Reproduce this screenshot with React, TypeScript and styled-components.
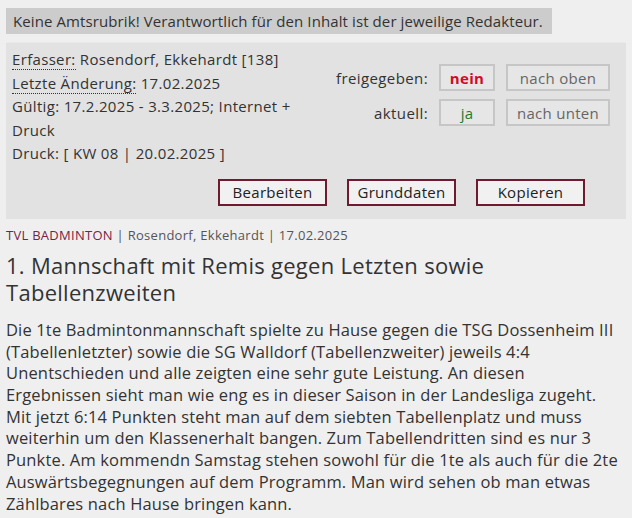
import React from "react";
import styled, { createGlobalStyle } from "styled-components";

const Global = createGlobalStyle`
  html, body { margin: 0; padding: 0; background: #efefef; }
  body { font-family: "Open Sans", "Liberation Sans", sans-serif; color: #333; }
`;

const Page = styled.div`
  padding: 8px 6px 0 6px;
  display: flex;
  flex-direction: column;
  align-items: flex-start;
`;

const Notice = styled.div`
  background: #cccccc;
  font-size: 15px;
  letter-spacing: 0.1px;
  line-height: 26px;
  height: 26px;
  padding: 0 6px 0 7px;
  width: 546px;
  box-sizing: border-box;
  color: #333;
  white-space: nowrap;
`;

const Panel = styled.div`
  margin-top: 8px;
  width: 620px;
  box-sizing: border-box;
  background: #e2e2e2;
  border-top: 1px solid #e9e9e9;
  padding: 5px 0 13px 6px;
  display: flex;
  flex-direction: column;
`;

const PanelTop = styled.div`
  display: flex;
  justify-content: space-between;
`;

const Info = styled.div`
  width: 292px;
  font-size: 15px;
  letter-spacing: 0.33px;
  line-height: 23.6px;
  color: #333;
`;

const Abbr = styled.span`
  border-bottom: 1px dotted #333;
`;

const Status = styled.div`
  margin-top: 16px;
  margin-right: 16px;
  display: grid;
  grid-template-columns: auto 56px 104px;
  column-gap: 11px;
  row-gap: 8px;
  align-items: center;
  align-self: flex-start;
`;

const Label = styled.span`
  font-size: 15px;
  letter-spacing: 0.4px;
  text-align: right;
  color: #333;
`;

const Flag = styled.div<{ $on?: boolean }>`
  height: 27px;
  box-sizing: border-box;
  border: 2px solid #c6c6c6;
  background: #e6e6e6;
  display: flex;
  align-items: center;
  justify-content: center;
  font-size: 15px;
  letter-spacing: 0.3px;
  color: ${(p) => (p.$on ? "#1e7b2e" : "#d40a1e")};
  font-weight: ${(p) => (p.$on ? 400 : 700)};
`;

const MoveBtn = styled.div`
  height: 27px;
  box-sizing: border-box;
  border: 2px solid #c6c6c6;
  background: #e6e6e6;
  display: flex;
  align-items: center;
  justify-content: center;
  font-size: 15px;
  letter-spacing: 0.3px;
  color: #666;
`;

const Actions = styled.div`
  margin-top: 13px;
  display: flex;
  justify-content: flex-end;
  gap: 20px;
  padding-right: 41px;
`;

const ActionBtn = styled.div`
  width: 109px;
  height: 27px;
  box-sizing: border-box;
  border: 2px solid #6e1a30;
  background: #f1f1f1;
  display: flex;
  align-items: center;
  justify-content: center;
  font-size: 15px;
  letter-spacing: 0.3px;
  color: #222;
`;

const Meta = styled.div`
  margin-top: 7px;
  font-size: 13px;
  letter-spacing: 0.28px;
  line-height: 18px;
  color: #555;
`;

const Rubrik = styled.span`
  color: #7b2244;
`;

const Title = styled.h1`
  margin: 8px 0 0 0;
  font-size: 22px;
  letter-spacing: 0.28px;
  font-weight: 400;
  line-height: 27px;
  color: #333;
`;

const Body = styled.p`
  margin: 13px 0 0 0;
  font-size: 16.5px;
  letter-spacing: 0.15px;
  line-height: 21.7px;
  color: #333;
  width: 618px;
`;

export default function App() {
  return (
    <>
      <Global />
      <Page>
        <Notice>Keine Amtsrubrik! Verantwortlich für den Inhalt ist der jeweilige Redakteur.</Notice>
        <Panel>
          <PanelTop>
            <Info>
              <div>
                <Abbr>Erfasser:</Abbr> Rosendorf, Ekkehardt [138]
              </div>
              <div>
                <Abbr>Letzte Änderung:</Abbr> 17.02.2025
              </div>
              <div>Gültig: 17.2.2025 - 3.3.2025; Internet + Druck</div>
              <div>Druck: [ KW 08 | 20.02.2025 ]</div>
            </Info>
            <Status>
              <Label>freigegeben:</Label>
              <Flag>nein</Flag>
              <MoveBtn>nach oben</MoveBtn>
              <Label>aktuell:</Label>
              <Flag $on>ja</Flag>
              <MoveBtn>nach unten</MoveBtn>
            </Status>
          </PanelTop>
          <Actions>
            <ActionBtn>Bearbeiten</ActionBtn>
            <ActionBtn>Grunddaten</ActionBtn>
            <ActionBtn>Kopieren</ActionBtn>
          </Actions>
        </Panel>
        <Meta>
          <Rubrik>TVL BADMINTON</Rubrik> | Rosendorf, Ekkehardt | 17.02.2025
        </Meta>
        <Title>1. Mannschaft mit Remis gegen Letzten sowie Tabellenzweiten</Title>
        <Body>
          Die 1te Badmintonmannschaft spielte zu Hause gegen die TSG Dossenheim III (Tabellenletzter) sowie die SG
          Walldorf (Tabellenzweiter) jeweils 4:4 Unentschieden und alle zeigten eine sehr gute Leistung. An diesen
          Ergebnissen sieht man wie eng es in dieser Saison in der Landesliga zugeht. Mit jetzt 6:14 Punkten steht man
          auf dem siebten Tabellenplatz und muss weiterhin um den Klassenerhalt bangen. Zum Tabellendritten sind es nur
          3 Punkte. Am kommendn Samstag stehen sowohl für die 1te als auch für die 2te Auswärtsbegegnungen auf dem
          Programm. Man wird sehen ob man etwas Zählbares nach Hause bringen kann.
        </Body>
      </Page>
    </>
  );
}
